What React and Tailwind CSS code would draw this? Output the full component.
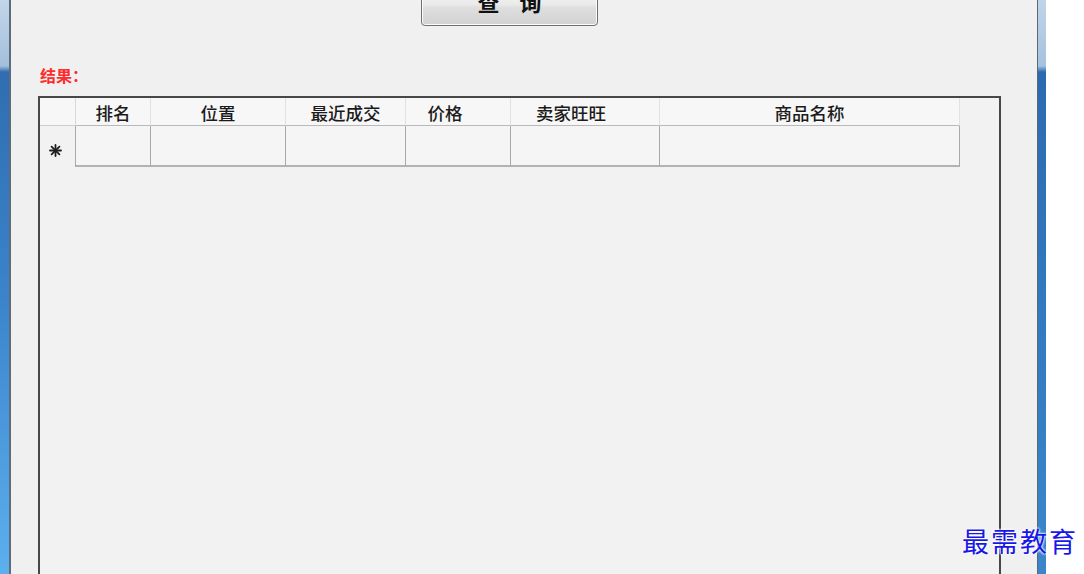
import React from 'react';

const columns = [
  { name: '排名', width: 'w-[75px]', pad: '' },
  { name: '位置', width: 'w-[135px]', pad: '' },
  { name: '最近成交', width: 'w-[120px]', pad: '' },
  { name: '价格', width: 'w-[105px]', pad: 'pr-[26px]' },
  { name: '卖家旺旺', width: 'w-[149px]', pad: 'pr-[28px]' },
  { name: '商品名称', width: 'w-[300px]', pad: '' },
];

// row header glyph for the "new row" line
const NewRowMark = () => (
  <svg width="13" height="13" viewBox="0 0 13 13" className="mt-[8px] ml-[-4px]">
    <g stroke="#1f1f1f" strokeWidth="1.8" strokeLinecap="round">
      <line x1="6.5" y1="1" x2="6.5" y2="12" />
      <line x1="1" y1="6.5" x2="12" y2="6.5" />
      <line x1="2.6" y1="2.6" x2="10.4" y2="10.4" />
      <line x1="10.4" y1="2.6" x2="2.6" y2="10.4" />
    </g>
  </svg>
);

const App = () => {
  return (
    <div className="relative flex w-[1084px] h-[574px] overflow-hidden bg-white font-['Noto_Sans_CJK_SC',sans-serif]">
      {/* window frame, left */}
      <div className="w-[9px] h-full bg-[linear-gradient(to_bottom,#c3d6ea_0px,#a3bfdc_66px,#2f6db0_72px,#3b84cb_300px,#5cb0ee_574px)]"></div>
      <div className="w-[2px] h-full bg-[#5e6b78]"></div>

      {/* form body */}
      <div className="flex-1 h-full bg-[#f0f0f0] flex flex-col">
        <div className="flex justify-start pl-[410px]">
          <button
            type="button"
            className="mt-[-14px] w-[177px] h-[40px] rounded-[4px] border border-[#707070] bg-[linear-gradient(to_bottom,#f4f4f4_0%,#ebebeb_45%,#dedede_55%,#d2d2d2_100%)] shadow-[inset_0_0_0_1px_#fbfbfb] flex justify-center items-start pt-[3px]"
          >
            <span className="text-[22px] leading-none font-bold text-[#111] tracking-[0.9em] pl-[0.9em]">查询</span>
          </button>
        </div>

        <div className="mt-[41px] ml-[29px] text-[16px] leading-none font-bold text-[#ff2a2a]">结果：</div>

        {/* grid */}
        <div className="mt-[13px] ml-[27px] w-[963px] flex-1 border-2 border-b-0 border-[#474747] bg-[#f2f2f2]">
          <div className="flex h-[28px]">
            <div className="w-[36px] h-full bg-[#f7f7f7] border-b border-[#cfcfcf] border-r border-r-[#d9d9d9]"></div>
            {columns.map((col) => (
              <div
                key={col.name}
                className={`${col.width} h-full bg-[#f7f7f7] border-b border-[#b9b9b9] border-r border-r-[#e2e2e2] flex items-center justify-center pt-[3px] ${col.pad}`}
              >
                <span className="text-[17.5px] leading-none font-medium text-[#1b1b1b]">{col.name}</span>
              </div>
            ))}
          </div>
          <div className="flex h-[41px]">
            <div className="w-[36px] h-full flex items-center justify-center border-r border-[#a9a9a9]">
              <NewRowMark />
            </div>
            {columns.map((col) => (
              <div
                key={col.name}
                className={`${col.width} h-full bg-[#f5f5f5] border-b-2 border-r border-[#a9a9a9] border-b-[#b3b3b3]`}
              ></div>
            ))}
          </div>
        </div>
      </div>

      {/* window frame, right */}
      <div className="w-[1px] h-full bg-[#5e6872]"></div>
      <div className="w-[8px] h-full bg-[linear-gradient(to_bottom,#c0d4ea_0px,#a6c2de_66px,#2c6ab0_72px,#3179c0_300px,#3a86cc_574px)]"></div>
      <div className="w-[38px] h-full bg-white"></div>

      {/* watermark */}
      <div className="absolute left-[962px] top-[527px] text-[27px] leading-none tracking-[2px] text-[#1818e6] [text-shadow:0_0_2px_#fff,0_0_2px_#fff,0_0_3px_#fff]">
        最需教育
      </div>
    </div>
  );
};

export default App;
